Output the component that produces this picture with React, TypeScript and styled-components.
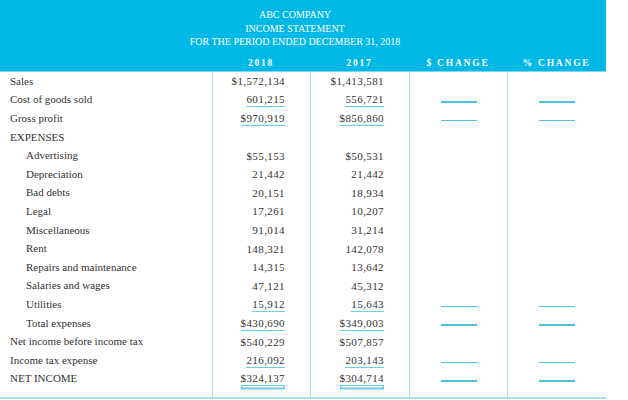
import styled, { createGlobalStyle } from "styled-components";

const GlobalStyle = createGlobalStyle`
  html, body {
    margin: 0;
    padding: 0;
    background: #ffffff;
  }
`;

type Line = "none" | "single" | "double";

interface RowData {
  label: string;
  indent?: boolean;
  y2018?: string;
  y2017?: string;
  line?: Line;
  blank?: boolean;
}

const rows: RowData[] = [
  { label: "Sales", y2018: "$1,572,134", y2017: "$1,413,581" },
  { label: "Cost of goods sold", y2018: "601,215", y2017: "556,721", line: "single", blank: true },
  { label: "Gross profit", y2018: "$970,919", y2017: "$856,860", line: "single", blank: true },
  { label: "EXPENSES" },
  { label: "Advertising", indent: true, y2018: "$55,153", y2017: "$50,531" },
  { label: "Depreciation", indent: true, y2018: "21,442", y2017: "21,442" },
  { label: "Bad debts", indent: true, y2018: "20,151", y2017: "18,934" },
  { label: "Legal", indent: true, y2018: "17,261", y2017: "10,207" },
  { label: "Miscellaneous", indent: true, y2018: "91,014", y2017: "31,214" },
  { label: "Rent", indent: true, y2018: "148,321", y2017: "142,078" },
  { label: "Repairs and maintenance", indent: true, y2018: "14,315", y2017: "13,642" },
  { label: "Salaries and wages", indent: true, y2018: "47,121", y2017: "45,312" },
  { label: "Utilities", indent: true, y2018: "15,912", y2017: "15,643", line: "single", blank: true },
  { label: "Total expenses", indent: true, y2018: "$430,690", y2017: "$349,003", line: "single", blank: true },
  { label: "Net income before income tax", y2018: "$540,229", y2017: "$507,857" },
  { label: "Income tax expense", y2018: "216,092", y2017: "203,143", line: "single", blank: true },
  { label: "NET INCOME", y2018: "$324,137", y2017: "$304,714", line: "double", blank: true },
];

const COLS = "212px 98px 99px 98px 99px";

export default function App() {
  return (
    <>
      <GlobalStyle />
      <Statement>
        <Header>
          <TitleLine>ABC COMPANY</TitleLine>
          <TitleLine>INCOME STATEMENT</TitleLine>
          <TitleLine>FOR THE PERIOD ENDED DECEMBER 31, 2018</TitleLine>
          <HeadRow>
            <div />
            <ColHead>2018</ColHead>
            <ColHead>2017</ColHead>
            <ColHead>$ CHANGE</ColHead>
            <ColHead>% CHANGE</ColHead>
          </HeadRow>
        </Header>
        <Body>
          <LabelCol>
            {rows.map((r, i) => (
              <Label key={i} $indent={!!r.indent}>
                {r.label}
              </Label>
            ))}
          </LabelCol>
          {(["y2018", "y2017"] as const).map((key) => (
            <NumCol key={key}>
              {rows.map((r, i) => (
                <NumCell key={i}>
                  {r[key] && <Amount $line={r.line || "none"}>{r[key]}</Amount>}
                </NumCell>
              ))}
            </NumCol>
          ))}
          {[0, 1].map((c) => (
            <ChangeCol key={c}>
              {rows.map((r, i) => (
                <ChangeCell key={i}>{r.blank && <Blank />}</ChangeCell>
              ))}
            </ChangeCol>
          ))}
        </Body>
      </Statement>
    </>
  );
}

const Statement = styled.div`
  width: 606px;
  font-family: "Liberation Serif", "Times New Roman", serif;
  color: #333333;
`;

const Header = styled.div`
  background: #00b8e6;
  color: #ffffff;
  padding-top: 8px;
  border-bottom: 1px solid #7fd6ee;
`;

const TitleLine = styled.div`
  font-size: 10px;
  line-height: 13.5px;
  text-align: center;
  padding-right: 16px;
`;

const HeadRow = styled.div`
  display: grid;
  grid-template-columns: ${COLS};
  height: 22px;
  align-items: end;
  padding-bottom: 2px;
  box-sizing: border-box;
`;

const ColHead = styled.div`
  font-size: 9.5px;
  line-height: 11px;
  font-weight: bold;
  letter-spacing: 1.8px;
  text-align: center;
`;

const Body = styled.div`
  display: grid;
  grid-template-columns: ${COLS};
  border-bottom: 2px solid #a6dff0;
  padding-bottom: 9px;
`;

const LabelCol = styled.div`
  display: flex;
  flex-direction: column;
`;

const Label = styled.div<{ $indent: boolean }>`
  height: 18.6px;
  display: flex;
  align-items: center;
  padding-left: ${(p) => (p.$indent ? "26px" : "10px")};
  font-size: 11px;
  white-space: nowrap;
`;

const NumCol = styled.div`
  display: flex;
  flex-direction: column;
  border-left: 1px solid #a6dff0;
  margin-bottom: -9px;
  padding-bottom: 9px;
`;

const NumCell = styled.div`
  height: 18.6px;
  display: flex;
  align-items: center;
  justify-content: flex-end;
  padding-right: 25px;
  font-size: 11px;
  letter-spacing: 0.4px;
`;

const Amount = styled.span<{ $line: Line }>`
  line-height: 12px;
  padding-bottom: 1px;
  border-bottom: ${(p) => (p.$line === "none" ? "none" : "1.5px solid #6ccfe6")};
  box-shadow: ${(p) => (p.$line === "double" ? "0 3px 0 -1.5px #ffffff, 0 3.5px 0 0 #6ccfe6" : "none")};
  margin-top: 2px;
`;

const ChangeCol = styled.div`
  display: flex;
  flex-direction: column;
  border-left: 1px solid #a6dff0;
  margin-bottom: -9px;
  padding-bottom: 9px;
`;

const ChangeCell = styled.div`
  height: 18.6px;
  display: flex;
  align-items: flex-end;
  justify-content: center;
  padding-bottom: 6px;
  box-sizing: border-box;
`;

const Blank = styled.div`
  width: 36px;
  height: 1.5px;
  background: #4ec3e0;
`;
